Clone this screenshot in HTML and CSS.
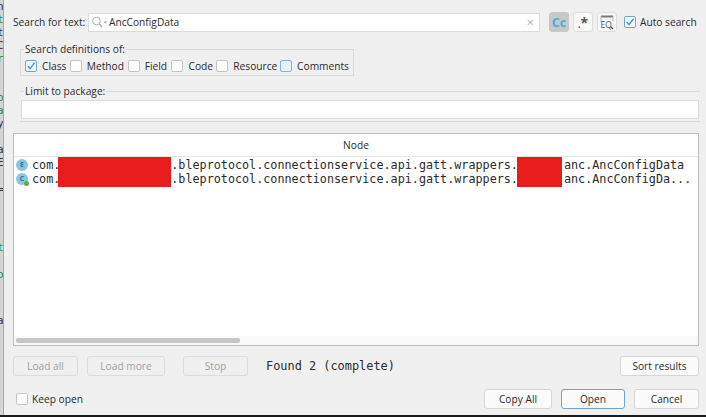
FILE: index.html
```html
<!DOCTYPE html>
<html lang="en">
<head>
<meta charset="utf-8">
<title>Text search</title>
<link rel="stylesheet" href="styles.css">
</head>
<body>
<div class="screen">
  <div class="editor-strip">
    <span class="g dark">n</span><span class="g green">t</span><span class="g dark">t</span><span class="g dark">C</span><span class="g green">r</span>
    <span class="g green gap-a">b</span><span class="g green">a</span><span class="g dark">y</span>
    <span class="g dark gap-b">a</span><span class="g dark">E</span>
    <span class="g dark gap-c">=</span>
    <span class="g green gap-d">t</span><span class="g green gap-e">o</span><span class="g dark gap-f">a</span>
  </div>
  <div class="dialog">
    <div class="search-row">
      <label class="field-label">Search for text:</label>
      <div class="search-input">
        <svg class="lens" width="17" height="12" viewBox="0 0 17 12"><circle cx="5.5" cy="5" r="3.8" fill="none" stroke="#b0b0b0" stroke-width="1"/><path d="M8.5 8l2.6 3" stroke="#a9a9a9" stroke-width="1.2" fill="none"/><path d="M12.5 5.5h3.6l-1.8 2z" fill="#a0a0a0"/></svg>
        <span class="search-value">AncConfigData</span>
        <span class="clear">×</span>
      </div>
      <div class="tool active"><span class="cc">Cc</span></div>
      <div class="tool"><span class="regex"><span class="regex-dot">.</span>*</span></div>
      <div class="tool">
        <svg width="14" height="15" viewBox="0 0 14 15"><path d="M1 1.5h12" stroke="#777" stroke-width="2"/><path d="M1 1v6M13 1v5" stroke="#b5b5b5" fill="none"/><text x="0.5" y="12.5" class="eq">EQ</text><path d="M10.5 11.5l2.5 2.5" stroke="#555" stroke-width="1.2"/></svg>
      </div>
      <label class="check auto"><span class="box on"><svg width="11" height="10" viewBox="0 0 11 10"><path d="M2 5l2.5 3L9.5 1.2" fill="none" stroke="#3d8fd6" stroke-width="1.4"/></svg></span>Auto search</label>
    </div>

    <fieldset class="group defs">
      <legend>Search definitions of:</legend>
      <div class="checks">
        <label class="check w-class"><span class="box on"><svg width="11" height="10" viewBox="0 0 11 10"><path d="M2 5l2.5 3L9.5 1.2" fill="none" stroke="#3d8fd6" stroke-width="1.4"/></svg></span>Class</label>
        <label class="check w-method"><span class="box"></span>Method</label>
        <label class="check w-field"><span class="box"></span>Field</label>
        <label class="check w-code"><span class="box"></span>Code</label>
        <label class="check w-resource"><span class="box"></span>Resource</label>
        <label class="check"><span class="box focus"></span>Comments</label>
      </div>
    </fieldset>

    <fieldset class="group limit">
      <legend>Limit to package:</legend>
      <div class="package-input"></div>
    </fieldset>

    <div class="results">
      <div class="results-head">Node</div>
      <div class="rows">
        <div class="row">
          <span class="badge">E</span>
          <span class="code">com.<span class="hide-a"></span>.bleprotocol.connectionservice.api.gatt.wrappers.<span class="hide-b"></span>anc.AncConfigData</span>
        </div>
        <div class="row">
          <span class="badge">C<i class="dot"></i></span>
          <span class="code">com.<span class="hide-a"></span>.bleprotocol.connectionservice.api.gatt.wrappers.<span class="hide-b"></span>anc.AncConfigDa...</span>
        </div>
        <div class="redact first"></div>
        <div class="redact second"></div>
      </div>
      <div class="hscroll"><div class="thumb"></div></div>
    </div>

    <div class="actions">
      <button class="btn off w-loadall">Load all</button>
      <button class="btn off w-loadmore">Load more</button>
      <button class="btn off w-stop">Stop</button>
      <span class="status">Found 2 (complete)</span>
      <button class="btn w-sort">Sort results</button>
    </div>

    <div class="footer">
      <label class="check keep"><span class="box"></span>Keep open</label>
      <button class="btn w-copy">Copy All</button>
      <button class="btn primary w-open">Open</button>
      <button class="btn w-cancel">Cancel</button>
    </div>
  </div>
</div>
<div class="taskline"></div>
</body>
</html>
```
FILE: styles.css
```css
* { box-sizing: border-box; }
html, body { margin: 0; padding: 0; }
body {
  width: 706px;
  height: 417px;
  overflow: hidden;
  background: #000;
  font-family: "Open Sans", "Noto Sans", sans-serif;
  font-size: 10.2px;
  color: #2b2b2b;
}
.screen { display: flex; height: 415px; background: #f0f0f0; }
.taskline { height: 2px; background: #1a1a1a; }

.editor-strip {
  width: 4px;
  flex: none;
  background: #d4d4d4;
  border-right: 1px solid #a8a8a8;
  overflow: hidden;
  display: flex;
  flex-direction: column;
  font-family: "DejaVu Sans Mono", monospace;
  font-size: 11px;
  line-height: 13px;
}
.g { display: block; height: 13px; margin-left: -3px; }
.green { color: #2d8a2d; }
.dark { color: #333; }
.gap-a { margin-top: 26px; }
.gap-b { margin-top: 13px; }
.gap-c { margin-top: 14px; }
.gap-d { margin-top: 45px; }
.gap-e { margin-top: 14px; }
.gap-f { margin-top: 33px; }

.dialog {
  flex: 1;
  min-width: 0;
  border-bottom-left-radius: 6px;
  background: #f0f0f0;
  display: flex;
  flex-direction: column;
  padding: 12px 7px 0 9px;
}

.search-row { display: flex; align-items: center; height: 20px; }
.field-label { width: 75px; white-space: nowrap; }
.search-input {
  width: 452px;
  height: 19px;
  background: #fff;
  border: 1px solid #dcdcdc;
  display: flex;
  align-items: center;
  padding-left: 2px;
}
.lens { flex: none; }
.search-value { margin-left: 1px; flex: 1; }
.clear { color: #b5b5b5; font-size: 13px; margin-right: 5px; line-height: 1; }
.tool {
  width: 20px;
  height: 20px;
  margin-left: 4px;
  flex: none;
  background: #f8f8f8;
  border: 1px solid #dedede;
  border-radius: 3px;
  display: flex;
  align-items: center;
  justify-content: center;
}
.tool.active { margin-left: 9px; background: #c8c8c8; border-color: #c8c8c8; }
.cc { color: #4ab0d8; font-weight: 700; font-size: 12.5px; }
.regex { color: #555; font-weight: 700; font-size: 14px; line-height: 14px; height: 12px; }
.regex-dot { font-size: 10px; }
.eq { font-size: 8.5px; fill: #555; font-family: "Open Sans", sans-serif; }

.check { display: flex; align-items: center; gap: 5px; white-space: nowrap; }
.auto { margin-left: 7px; gap: 4px; }
.box {
  width: 12px;
  height: 12px;
  flex: none;
  background: #fff;
  border: 1px solid #c4c4c4;
  border-radius: 2px;
  display: flex;
  align-items: center;
  justify-content: center;
}
.box.on { border-color: #6aa8dc; background: #f4f9fd; }
.box.focus { border-color: #7fb2de; background: #e8f1fa; border-width: 1.5px; }

.group { margin: 0; min-width: 0; border: 1px solid #dadada; }
.group legend { padding: 0 1px; margin-left: -1px; line-height: 12px; }
.defs {
  margin: 11px 0 0 7px;
  width: 334px;
  height: 33px;
  padding: 0 4px;
}
.checks { display: flex; margin-top: 4px; }
.w-class { width: 45px; }
.w-method { width: 58px; }
.w-field { width: 44px; }
.w-code { width: 45px; }
.w-resource { width: 64px; }

.limit {
  margin: 9px 0 0 7px;
  width: 680px;
  height: 37px;
  padding: 0 1px;
  border-left: 0;
  border-right: 0;
}
.limit legend { margin-left: 3px; }
.package-input { height: 19px; margin-top: 3px; background: #fff; border: 1px solid #dcdcdc; }

.results {
  margin-top: 11px;
  width: 686px;
  height: 213px;
  background: #fff;
  border: 1px solid #bdbdbd;
  display: flex;
  flex-direction: column;
}
.results-head {
  height: 23px;
  flex: none;
  border-bottom: 1px solid #e6e6e6;
  text-align: center;
  line-height: 22px;
}
.rows { flex: 1; position: relative; padding-top: 1px; }
.row { display: flex; align-items: center; height: 14px; padding-left: 2px; }
.badge {
  position: relative;
  width: 12px;
  height: 12px;
  flex: none;
  border-radius: 50%;
  background: #85c8e8;
  color: #4d6b7a;
  font-size: 7px;
  font-weight: 700;
  line-height: 12px;
  text-align: center;
}
.dot {
  position: absolute;
  right: -1px;
  bottom: -1px;
  width: 5px;
  height: 5px;
  border-radius: 50%;
  background: #5cb531;
}
.code {
  margin-left: 4px;
  font-family: "DejaVu Sans Mono", monospace;
  font-size: 11.75px;
  color: #2b2b2b;
  white-space: nowrap;
}
.hide-a { display: inline-block; width: 111px; }
.hide-b { display: inline-block; width: 46px; }
.redact { position: absolute; top: 0; height: 30px; background: #e91c1c; }
.redact.first { left: 44px; width: 113px; }
.redact.second { left: 503px; width: 45px; }
.hscroll { height: 9px; flex: none; background: #f9f9f9; padding: 2px 2px; }
.thumb { width: 224px; height: 5px; background: #c6c6c6; border-radius: 2px; }

.btn {
  height: 20px;
  padding: 0;
  flex: none;
  font: inherit;
  color: #2b2b2b;
  background: #fbfbfb;
  border: 1px solid #d6d6d6;
  border-radius: 3px;
}
.btn.off { background: #f0f0f0; color: #a0a0a0; border-color: #dcdcdc; }
.btn.primary { border: 1.5px solid #6ea3cf; }
.actions { display: flex; align-items: center; margin-top: 10px; width: 686px; }
.w-loadall { width: 65px; }
.w-loadmore { width: 78px; margin-left: 9px; }
.w-stop { width: 65px; margin-left: 18px; }
.status {
  margin-left: 18px;
  flex: 1;
  font-family: "DejaVu Sans Mono", monospace;
  font-size: 11.9px;
  color: #2b2b2b;
}
.w-sort { width: 79px; }
.footer { display: flex; align-items: center; margin-top: 13px; width: 686px; }
.keep { margin-left: 3px; flex: 1; gap: 4px; }
.w-copy { width: 68px; }
.w-open { width: 64px; margin-left: 9px; }
.w-cancel { width: 65px; margin-left: 9px; }
```
